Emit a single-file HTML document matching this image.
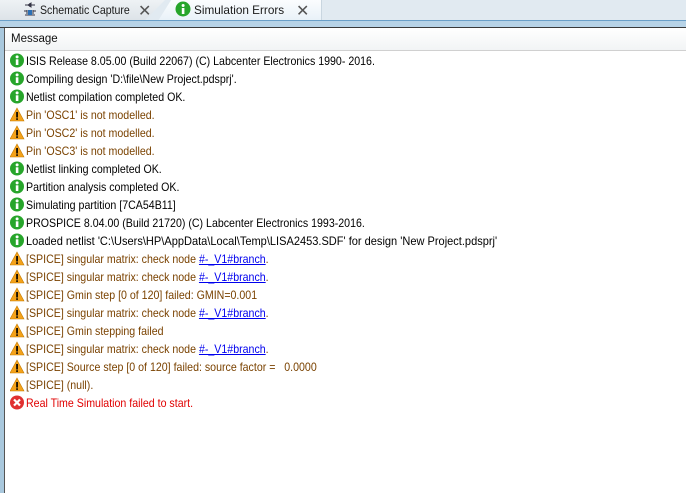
<!DOCTYPE html>
<html><head><style>
body{margin:0;width:686px;height:493px;overflow:hidden;background:#fff;font-family:"Liberation Sans",sans-serif;position:relative}
.tabbar{position:absolute;left:0;top:0;width:686px;height:20px;background:#e1eaf1}
.tabline{position:absolute;left:0;top:20px;width:686px;height:1px;background:#6a9fc8}
.tabstrip{position:absolute;left:0;top:21px;width:686px;height:6px;background:#b7d3e7}
.dark{position:absolute;left:0;top:27px;width:686px;height:1px;background:#3a3a3a}
.tab1{position:absolute;left:0;top:0;width:165px;height:20px;background:linear-gradient(#eef2f5,#dde3e8);clip-path:polygon(0 0,100% 0,88% 100%,0 100%)}
.tab2{position:absolute;left:158px;top:0;width:163px;height:21px;background:linear-gradient(#fbfdfe,#e8f1f8);clip-path:polygon(8% 0,100% 0,100% 100%,0 100%);border-right:1px solid #c9d6e0}
.tt{position:absolute;top:3px;font-size:12px;color:#1a1a1a;transform:scaleX(.9);transform-origin:left}
.x{position:absolute;top:1px;font-size:16px;color:#555}
.side{position:absolute;left:0;top:28px;width:4px;height:465px;background:#a9c8dd}
.sideb{position:absolute;left:4px;top:28px;width:1px;height:465px;background:#555}
.hdr{position:absolute;left:5px;top:28px;width:681px;height:22px;background:linear-gradient(#fff,#f2f4f5);border-bottom:1px solid #d0d0d0}
.hdr span{position:absolute;left:6px;top:5px;font-size:11.5px;color:#111}
.rows{position:absolute;left:10px;top:52px}
.r{height:18px;position:relative;white-space:nowrap}
.r svg{position:absolute;left:0;top:1px}
.r span{position:absolute;left:16px;top:2px;font-size:12px;transform:scaleX(.885);transform-origin:left;color:#000}
.w span{color:#7a4200}.e span{color:#e00000}
a{color:#0000ee;text-decoration:underline}
</style></head><body>
<div class="tabbar"></div>
<div class="tab1"></div>
<div class="tab2"></div>
<div class="tabline"></div><div class="tabstrip"></div><div class="dark"></div>
<svg style="position:absolute;left:23px;top:2px" width="14" height="15"><path d="M2 3h10M7 1v4M5 3l3-2v4z M1 9h3M10 9h3M4 8v4M10 8v4M2 13h10" stroke="#334" fill="none"/><rect x="5" y="8" width="4" height="5" fill="#2a6fb5"/></svg>
<div class="tt" style="left:40px;transform:scaleX(.88)">Schematic Capture</div>
<div class="x" style="left:138px">✕</div>
<svg style="position:absolute;left:175px;top:1px" width="16" height="16"><circle cx="8" cy="8" r="7.5" fill="#27a52b"/><rect x="6.8" y="7" width="2.6" height="6" fill="#fff"/><circle cx="8.1" cy="4.5" r="1.5" fill="#fff"/></svg>
<div class="tt" style="left:194px;transform:scaleX(.98)">Simulation Errors</div>
<div class="x" style="left:296px">✕</div>
<div class="side"></div><div class="sideb"></div>
<div class="hdr"><span>Message</span></div>
<svg width="0" height="0" style="position:absolute"><defs>
<g id="i"><circle cx="7" cy="7.5" r="7" fill="#27a52b"/><rect x="5.8" y="6.3" width="2.6" height="5.7" fill="#fff"/><circle cx="7.1" cy="3.9" r="1.5" fill="#fff"/></g>
<g id="w"><path d="M7 1L14 14H0z" fill="#f4a21a" stroke="#c57a00" stroke-width=".6"/><rect x="6.2" y="5" width="1.7" height="5.5" fill="#000"/><rect x="6.2" y="11.3" width="1.7" height="1.6" fill="#000"/></g>
<g id="e"><circle cx="7" cy="7.5" r="7" fill="#e03030"/><path d="M4 4.5l6 6M10 4.5l-6 6" stroke="#fff" stroke-width="2.2"/></g>
</defs></svg>
<div class="rows">
<div class="r"><svg width="15" height="16"><use href="#i"/></svg><span>ISIS Release 8.05.00 (Build 22067) (C) Labcenter Electronics 1990- 2016.</span></div>
<div class="r"><svg width="15" height="16"><use href="#i"/></svg><span>Compiling design 'D:\file\New Project.pdsprj'.</span></div>
<div class="r"><svg width="15" height="16"><use href="#i"/></svg><span>Netlist compilation completed OK.</span></div>
<div class="r w"><svg width="15" height="16"><use href="#w"/></svg><span>Pin 'OSC1' is not modelled.</span></div>
<div class="r w"><svg width="15" height="16"><use href="#w"/></svg><span>Pin 'OSC2' is not modelled.</span></div>
<div class="r w"><svg width="15" height="16"><use href="#w"/></svg><span>Pin 'OSC3' is not modelled.</span></div>
<div class="r"><svg width="15" height="16"><use href="#i"/></svg><span>Netlist linking completed OK.</span></div>
<div class="r"><svg width="15" height="16"><use href="#i"/></svg><span>Partition analysis completed OK.</span></div>
<div class="r"><svg width="15" height="16"><use href="#i"/></svg><span>Simulating partition [7CA54B11]</span></div>
<div class="r"><svg width="15" height="16"><use href="#i"/></svg><span>PROSPICE 8.04.00 (Build 21720) (C) Labcenter Electronics 1993-2016.</span></div>
<div class="r"><svg width="15" height="16"><use href="#i"/></svg><span style="transform:scaleX(.92)">Loaded netlist 'C:\Users\HP\AppData\Local\Temp\LISA2453.SDF' for design 'New Project.pdsprj'</span></div>
<div class="r w"><svg width="15" height="16"><use href="#w"/></svg><span>[SPICE] singular matrix: check node <a>#-_V1#branch</a>.</span></div>
<div class="r w"><svg width="15" height="16"><use href="#w"/></svg><span>[SPICE] singular matrix: check node <a>#-_V1#branch</a>.</span></div>
<div class="r w"><svg width="15" height="16"><use href="#w"/></svg><span>[SPICE] Gmin step [0 of 120] failed: GMIN=0.001</span></div>
<div class="r w"><svg width="15" height="16"><use href="#w"/></svg><span>[SPICE] singular matrix: check node <a>#-_V1#branch</a>.</span></div>
<div class="r w"><svg width="15" height="16"><use href="#w"/></svg><span>[SPICE] Gmin stepping failed</span></div>
<div class="r w"><svg width="15" height="16"><use href="#w"/></svg><span>[SPICE] singular matrix: check node <a>#-_V1#branch</a>.</span></div>
<div class="r w"><svg width="15" height="16"><use href="#w"/></svg><span>[SPICE] Source step [0 of 120] failed: source factor = &nbsp;&nbsp;0.0000</span></div>
<div class="r w"><svg width="15" height="16"><use href="#w"/></svg><span>[SPICE] (null).</span></div>
<div class="r e"><svg width="15" height="16"><use href="#e"/></svg><span>Real Time Simulation failed to start.</span></div>
</div>
</body></html>
